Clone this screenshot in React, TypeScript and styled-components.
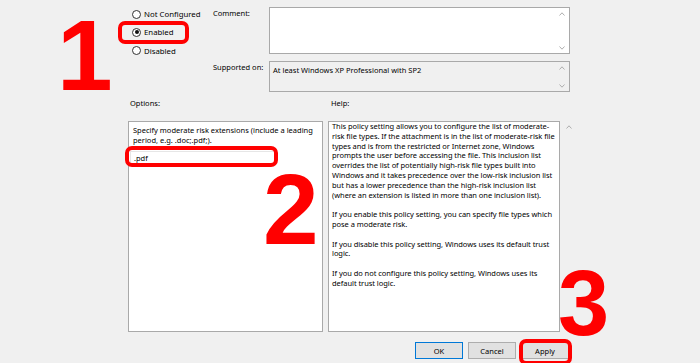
import React from 'react';
import styled, { createGlobalStyle } from 'styled-components';

const GlobalStyle = createGlobalStyle`
  html, body {
    margin: 0;
    padding: 0;
    background: #f0f0f0;
  }
  * {
    box-sizing: border-box;
  }
`;

const helpParagraphs: string[][] = [
  [
    'This policy setting allows you to configure the list of moderate-',
    'risk file types. If the attachment is in the list of moderate-risk file',
    'types and is from the restricted or Internet zone, Windows',
    'prompts the user before accessing the file. This inclusion list',
    'overrides the list of potentially high-risk file types built into',
    'Windows and it takes precedence over the low-risk inclusion list',
    'but has a lower precedence than the high-risk inclusion list',
    '(where an extension is listed in more than one inclusion list).',
  ],
  [
    'If you enable this policy setting, you can specify file types which',
    'pose a moderate risk.',
  ],
  [
    'If you disable this policy setting, Windows uses its default trust',
    'logic.',
  ],
  [
    'If you do not configure this policy setting, Windows uses its',
    'default trust logic.',
  ],
];

const radios = [
  { label: 'Not Configured', checked: false },
  { label: 'Enabled', checked: true },
  { label: 'Disabled', checked: false },
];

const Chevron: React.FC<{ $down?: boolean }> = ({ $down }) => (
  <svg width="6" height="4" viewBox="0 0 6 4">
    <path
      d={$down ? 'M0.5 0.5 L3 3.2 L5.5 0.5' : 'M0.5 3.5 L3 0.8 L5.5 3.5'}
      fill="none"
      stroke="#a6a6a6"
      strokeWidth="0.9"
    />
  </svg>
);

export default function App() {
  return (
    <>
      <GlobalStyle />
      <Page>
        <Dialog>
          <TopSection>
            <RadioGroup>
              {radios.map((r) => (
                <RadioRow key={r.label}>
                  <RadioCircle $checked={r.checked} />
                  <span>{r.label}</span>
                </RadioRow>
              ))}
            </RadioGroup>
            <Fields>
              <FieldLabel>Comment:</FieldLabel>
              <TextBox $height={47} $readOnly={false}>
                <ScrollArrows $top={4} $bottom={3}>
                  <Chevron />
                  <Chevron $down />
                </ScrollArrows>
              </TextBox>
              <FieldLabel>Supported on:</FieldLabel>
              <TextBox $height={31} $readOnly>
                <BoxText>At least Windows XP Professional with SP2</BoxText>
                <ScrollArrows $top={4} $bottom={3}>
                  <Chevron />
                  <Chevron $down />
                </ScrollArrows>
              </TextBox>
            </Fields>
          </TopSection>

          <SectionLabels>
            <SectionLabel>Options:</SectionLabel>
            <SectionLabel>Help:</SectionLabel>
          </SectionLabels>

          <Panels>
            <OptionsPanel>
              <OptionsText>
                Specify moderate risk extensions (include a leading
                <br />
                period, e.g. .doc;.pdf;).
              </OptionsText>
              <ExtensionInput>.pdf</ExtensionInput>
            </OptionsPanel>
            <HelpPanel>
              {helpParagraphs.map((p, i) => (
                <HelpParagraph key={i}>
                  {p.map((line) => (
                    <HelpLine key={line}>{line}</HelpLine>
                  ))}
                </HelpParagraph>
              ))}
            </HelpPanel>
            <HelpGutter>
              <Chevron />
              <Chevron $down />
            </HelpGutter>
          </Panels>

          <ButtonRow>
            <DialogButton $default>OK</DialogButton>
            <DialogButton>Cancel</DialogButton>
            <DialogButton>Apply</DialogButton>
          </ButtonRow>
        </Dialog>

        <Step $left={57} $top={5} $size={100}>1</Step>
        <Step $left={263} $top={159} $size={100}>2</Step>
        <Step $left={558} $top={257} $size={92}>3</Step>

        <Ring $left={118} $top={21} $width={71} $height={23} />
        <Ring $left={125} $top={146} $width={153} $height={21} />
        <Ring $left={519} $top={339} $width={53} $height={26} />
      </Page>
    </>
  );
}

const Page = styled.div`
  position: relative;
  width: 700px;
  height: 363px;
  overflow: hidden;
  background: #f0f0f0;
  color: #000;
  font-family: 'Noto Sans', 'Open Sans', sans-serif;
  font-size: 7.5px;
`;

const Dialog = styled.div`
  display: flex;
  flex-direction: column;
  width: 448px;
  margin-left: 128px;
  padding-top: 5px;
`;

const TopSection = styled.div`
  display: flex;
  height: 88px;
`;

const RadioGroup = styled.div`
  display: flex;
  flex-direction: column;
  width: 85px;
  padding-left: 4px;
`;

const RadioRow = styled.div`
  display: flex;
  align-items: center;
  gap: 3px;
  height: 18.3px;
  font-size: 7.8px;
`;

const RadioCircle = styled.span<{ $checked: boolean }>`
  position: relative;
  width: 9px;
  height: 9px;
  border: 1px solid #333;
  border-radius: 50%;
  background: #fff;

  ${(p) =>
    p.$checked &&
    `
    &::after {
      content: '';
      position: absolute;
      left: 1.5px;
      top: 1.5px;
      width: 4px;
      height: 4px;
      border-radius: 50%;
      background: #111;
    }
  `}
`;

const Fields = styled.div`
  display: grid;
  grid-template-columns: 56px 301px;
  row-gap: 5px;
  padding-top: 2px;
`;

const FieldLabel = styled.div`
  padding-top: 1px;
`;

const TextBox = styled.div<{ $height: number; $readOnly: boolean }>`
  display: flex;
  justify-content: space-between;
  height: ${(p) => p.$height}px;
  border: 1px solid #a9a9a9;
  background: ${(p) => (p.$readOnly ? '#f0f0f0' : '#fff')};
`;

const BoxText = styled.div`
  padding: 3px 0 0 3px;
`;

const ScrollArrows = styled.div<{ $top: number; $bottom: number }>`
  display: flex;
  flex-direction: column;
  justify-content: space-between;
  margin-left: auto;
  padding: ${(p) => `${p.$top}px 4px ${p.$bottom}px 0`};
`;

const SectionLabels = styled.div`
  display: grid;
  grid-template-columns: 201px 247px;
  padding: 5px 0 0 2px;
  height: 28px;
`;

const SectionLabel = styled.div``;

const Panels = styled.div`
  display: grid;
  grid-template-columns: 195px 232px 12px;
  column-gap: 5px;
  height: 211px;
`;

const OptionsPanel = styled.div`
  display: flex;
  flex-direction: column;
  border: 1px solid #a9a9a9;
  background: #fff;
  padding: 4px 4px;
`;

const OptionsText = styled.div`
  line-height: 9.5px;
  white-space: nowrap;
`;

const ExtensionInput = styled.div`
  margin: 6px 0 0 -3px;
  height: 13px;
  width: 146px;
  padding: 1px 0 0 3px;
  border: 1px solid #e6e6e6;
  background: #fff;
`;

const HelpPanel = styled.div`
  display: flex;
  flex-direction: column;
  gap: 9.8px;
  border: 1px solid #a9a9a9;
  background: #fff;
  padding: 0 3px;
`;

const HelpParagraph = styled.div`
  display: flex;
  flex-direction: column;
`;

const HelpLine = styled.div`
  height: 9.8px;
  line-height: 9.8px;
  letter-spacing: -0.05px;
  white-space: nowrap;
`;

const HelpGutter = styled.div`
  display: flex;
  flex-direction: column;
  justify-content: space-between;
  align-items: center;
  margin-left: -5px;
  padding: 4px 0 4px;
`;

const ButtonRow = styled.div`
  display: flex;
  justify-content: flex-end;
  gap: 5px;
  margin-top: 10px;
  padding-right: 7px;
`;

const DialogButton = styled.div<{ $default?: boolean }>`
  display: flex;
  align-items: center;
  justify-content: center;
  width: 48px;
  height: 17px;
  border: 1px solid ${(p) => (p.$default ? '#0078d7' : '#adadad')};
  background: #e1e1e1;
`;

const Step = styled.div<{ $left: number; $top: number; $size: number }>`
  position: absolute;
  left: ${(p) => p.$left}px;
  top: ${(p) => p.$top}px;
  color: #ff0000;
  font-family: 'Liberation Sans', Arial, sans-serif;
  font-weight: 700;
  font-size: ${(p) => p.$size}px;
  line-height: 1;
`;

const Ring = styled.div<{
  $left: number;
  $top: number;
  $width: number;
  $height: number;
}>`
  position: absolute;
  left: ${(p) => p.$left}px;
  top: ${(p) => p.$top}px;
  width: ${(p) => p.$width}px;
  height: ${(p) => p.$height}px;
  border: 4px solid #ff0000;
  border-radius: 7px;
`;
